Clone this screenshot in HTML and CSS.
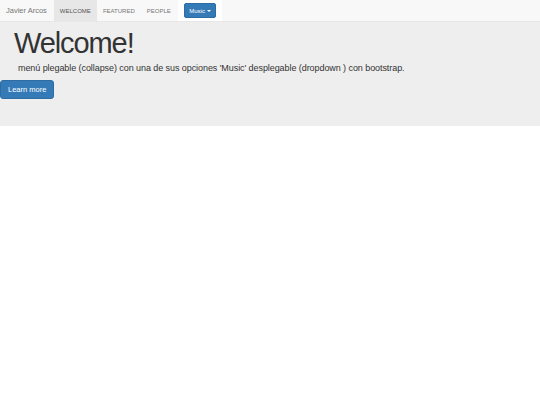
FILE: index.html
```html
<!DOCTYPE html>
<html>
<head>
<meta charset="utf-8">
<link rel="stylesheet" href="styles.css">
</head>
<body>
<nav class="navbar">
  <a class="brand">Javier Arcos</a>
  <ul class="nav">
    <li class="item active"><a>WELCOME</a></li>
    <li class="item"><a>FEATURED</a></li>
    <li class="item"><a>PEOPLE</a></li>
    <li class="item open"><span class="btn-music">Music <span class="caret"></span></span></li>
  </ul>
</nav>
<div class="jumbotron">
  <h1 class="title">Welcome!</h1>
  <p class="lead">menú plegable (collapse) con una de sus opciones 'Music' desplegable (dropdown ) con bootstrap.</p>
  <a class="btn-learn">Learn more</a>
</div>
</body>
</html>
```
FILE: styles.css
```css
* { box-sizing: border-box; }
body {
  margin: 0;
  font-family: "Liberation Sans", Arial, sans-serif;
  color: #333;
  background: #fff;
}
.navbar {
  display: flex;
  align-items: stretch;
  height: 22px;
  background: #f8f8f8;
  border-bottom: 1px solid #e7e7e7;
}
.brand {
  display: flex;
  align-items: center;
  padding: 0 7px 0 6px;
  font-size: 7.5px;
  color: #777;
}
.nav {
  display: flex;
  list-style: none;
  margin: 0;
  padding: 0;
}
.item {
  display: flex;
  align-items: center;
}
.item a {
  display: flex;
  align-items: center;
  height: 100%;
  padding: 0 6px;
  font-size: 6px;
  color: #777;
}
.item.active a {
  background: #e7e7e7;
  color: #555;
}
.item.open {
  background: #fff;
  padding: 0 6px;
  margin-left: 1px;
}
.btn-music {
  display: flex;
  align-items: center;
  gap: 2px;
  height: 15px;
  padding: 0 4.5px;
  background: #337ab7;
  border: 1px solid #2e6da4;
  border-radius: 2px;
  color: #fff;
  font-size: 6px;
}
.caret {
  width: 0;
  height: 0;
  border-left: 2px solid transparent;
  border-right: 2px solid transparent;
  border-top: 2px solid #fff;
}
.jumbotron {
  background: #eee;
  height: 104px;
  padding: 6px 0 0 0;
}
.title {
  margin: 0 0 0 14px;
  font-size: 29px;
  font-weight: 500;
  line-height: 30px;
  letter-spacing: -1.1px;
}
.lead {
  margin: 4px 0 0 18px;
  font-size: 9px;
  line-height: 12px;
  letter-spacing: -0.07px;
}
.btn-learn {
  display: inline-flex;
  align-items: center;
  height: 19px;
  margin-top: 6px;
  padding: 0 7px;
  background: #337ab7;
  border: 1px solid #2e6da4;
  border-radius: 3px;
  color: #fff;
  font-size: 7.5px;
}
```
